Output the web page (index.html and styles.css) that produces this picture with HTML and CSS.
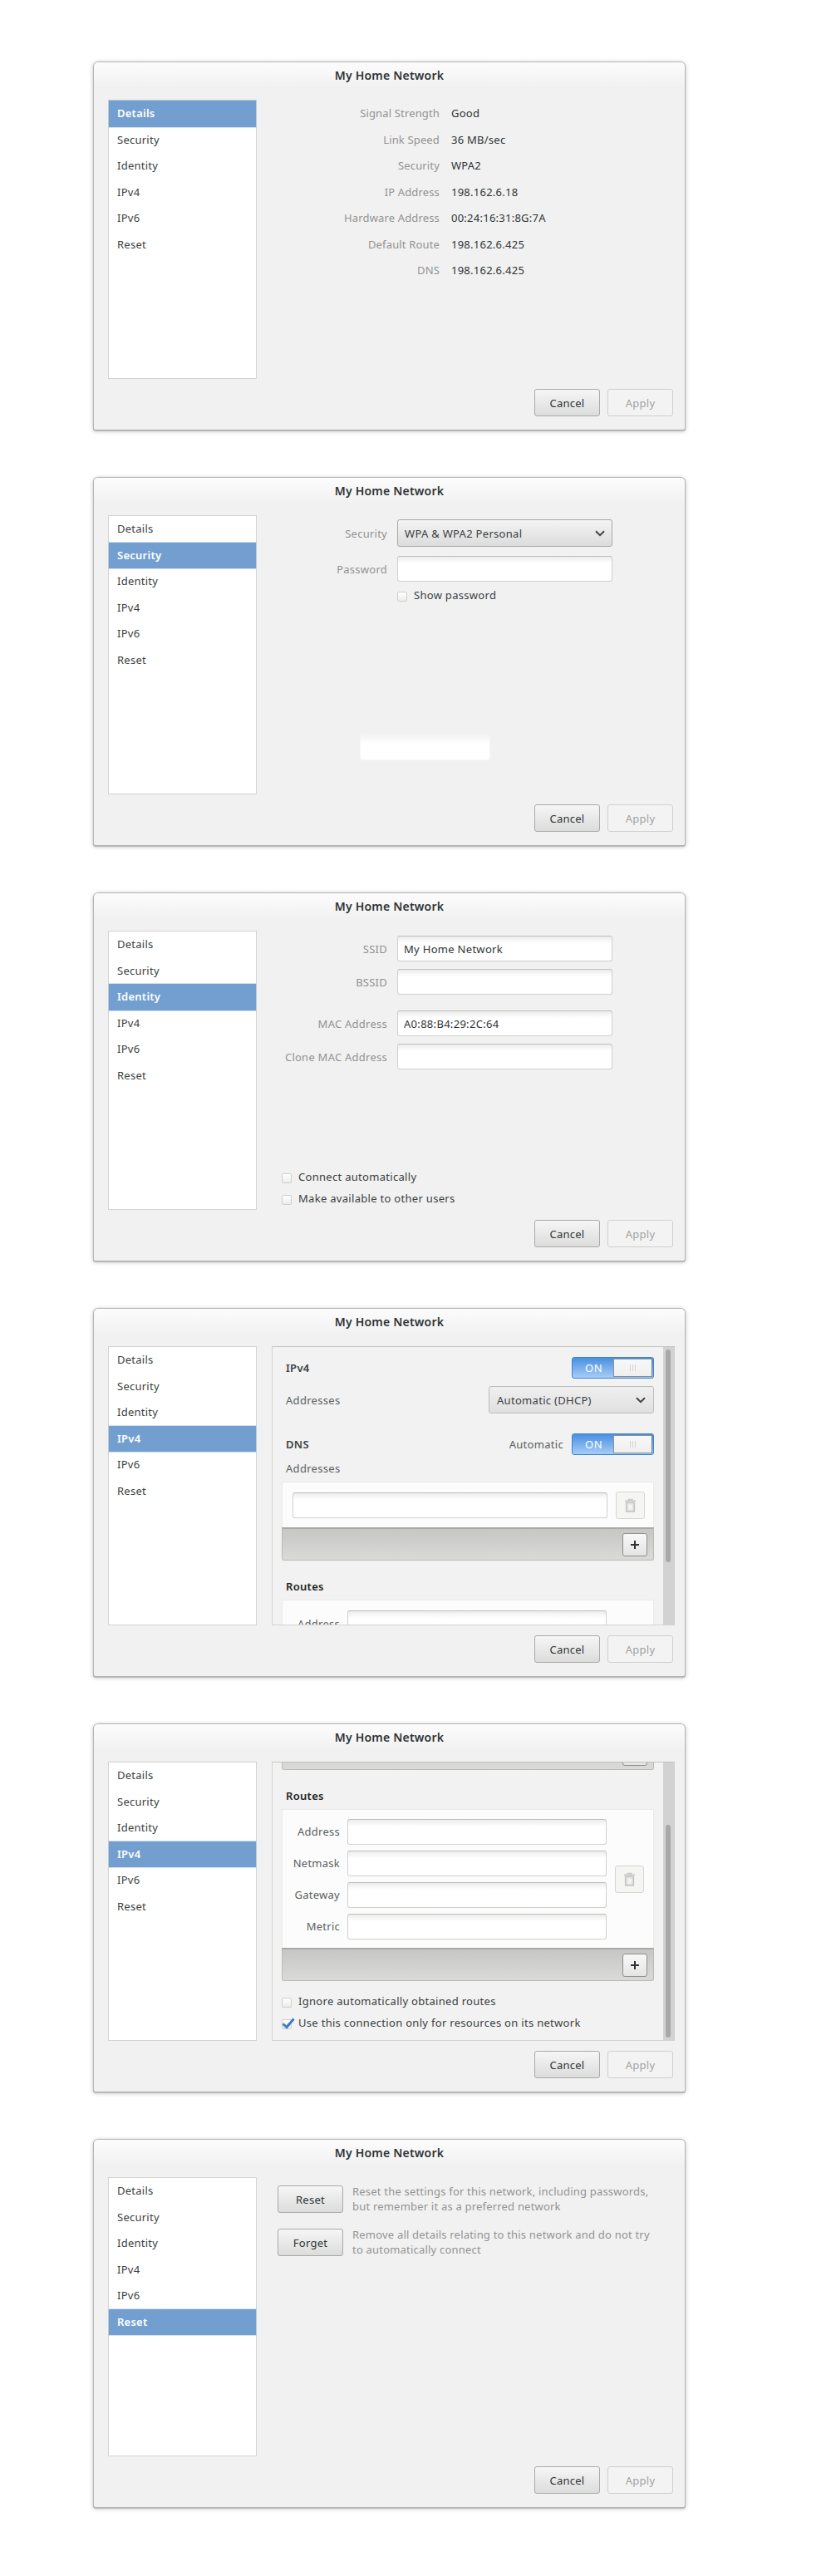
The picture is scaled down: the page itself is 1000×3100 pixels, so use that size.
FILE: index.html
```html
<!DOCTYPE html>
<html lang="en">
<head>
<meta charset="utf-8">
<title>My Home Network</title>
<link rel="stylesheet" href="styles.css">
</head>
<body>
<svg class="defs" width="0" height="0" aria-hidden="true">
  <symbol id="chev" viewBox="0 0 12 8"><path d="M1 1.200 6 6.200 11 1.200" fill="none" stroke="#3f4446" stroke-width="2"/></symbol>
  <symbol id="trash" viewBox="0 0 16 18"><path d="M1 3.500h14M5.500 3V1.500h5V3" fill="none" stroke="#c9c9c6" stroke-width="1.600"/><path d="M2.800 5.500h10.400v11.500H2.800z" fill="#e2e2df" stroke="#c4c4c1" stroke-width="1.600"/><path d="M5.500 8h5v6.500h-5z" fill="#f4f4f2"/></symbol>
  <symbol id="plus" viewBox="0 0 10 10"><path d="M5 0v10M0 5h10" stroke="#2e3436" stroke-width="2"/></symbol>
</svg>
<main class="page">

  <section class="dialog">
    <header class="title">My Home Network</header>
    <div class="body">
      <ul class="nav">
        <li class="sel">Details</li><li>Security</li><li>Identity</li><li>IPv4</li><li>IPv6</li><li>Reset</li>
      </ul>
      <dl class="details">
        <dt>Signal Strength</dt><dd>Good</dd>
        <dt>Link Speed</dt><dd>36 MB/sec</dd>
        <dt>Security</dt><dd>WPA2</dd>
        <dt>IP Address</dt><dd>198.162.6.18</dd>
        <dt>Hardware Address</dt><dd>00:24:16:31:8G:7A</dd>
        <dt>Default Route</dt><dd>198.162.6.425</dd>
        <dt>DNS</dt><dd>198.162.6.425</dd>
      </dl>
    </div>
    <footer class="foot"><button class="btn">Cancel</button><button class="btn off">Apply</button></footer>
  </section>

  <section class="dialog">
    <header class="title">My Home Network</header>
    <div class="body">
      <ul class="nav">
        <li>Details</li><li class="sel">Security</li><li>Identity</li><li>IPv4</li><li>IPv6</li><li>Reset</li>
      </ul>
      <div class="form sec">
        <div class="row"><label>Security</label><div class="select"><span>WPA &amp; WPA2 Personal</span><svg class="chev"><use href="#chev"/></svg></div></div>
        <div class="row gap11"><label>Password</label><input class="field" type="text"></div>
        <div class="check show"><i class="box"></i><span>Show password</span></div>
        <div class="ghost"></div>
      </div>
    </div>
    <footer class="foot"><button class="btn">Cancel</button><button class="btn off">Apply</button></footer>
  </section>

  <section class="dialog">
    <header class="title">My Home Network</header>
    <div class="body">
      <ul class="nav">
        <li>Details</li><li>Security</li><li class="sel">Identity</li><li>IPv4</li><li>IPv6</li><li>Reset</li>
      </ul>
      <div class="form ident">
        <div class="row"><label>SSID</label><input class="field" type="text" value="My Home Network"></div>
        <div class="row gap9"><label>BSSID</label><input class="field" type="text"></div>
        <div class="row gap19"><label>MAC Address</label><input class="field" type="text" value="A0:88:B4:29:2C:64"></div>
        <div class="row gap9"><label>Clone MAC Address</label><input class="field" type="text"></div>
        <div class="check auto"><i class="box"></i><span>Connect automatically</span></div>
        <div class="check avail"><i class="box"></i><span>Make available to other users</span></div>
      </div>
    </div>
    <footer class="foot"><button class="btn">Cancel</button><button class="btn off">Apply</button></footer>
  </section>

  <section class="dialog">
    <header class="title">My Home Network</header>
    <div class="body">
      <ul class="nav">
        <li>Details</li><li>Security</li><li>Identity</li><li class="sel">IPv4</li><li>IPv6</li><li>Reset</li>
      </ul>
      <div class="panel">
        <div class="view">
          <div class="scroll">
            <div class="line first"><h3>IPv4</h3><div class="toggle"><span>ON</span><b class="grip"><i></i><i></i><i></i></b></div></div>
            <div class="line addr"><p class="sub">Addresses</p><div class="select wide"><span>Automatic (DHCP)</span><svg class="chev"><use href="#chev"/></svg></div></div>
            <div class="line dns"><h3>DNS</h3><div class="auto-wrap"><p class="sub">Automatic</p><div class="toggle"><span>ON</span><b class="grip"><i></i><i></i><i></i></b></div></div></div>
            <p class="sub under">Addresses</p>
            <div class="list one"><input class="field" type="text"><button class="trash"><svg><use href="#trash"/></svg></button></div>
            <div class="bar"><button class="add"><svg><use href="#plus"/></svg></button></div>
            <h3 class="routes">Routes</h3>
            <div class="list four cut">
              <div class="grid">
                <label>Address</label><input class="field" type="text">
              </div>
            </div>
          </div>
        </div>
        <div class="track"><div class="thumb"></div></div>
      </div>
    </div>
    <footer class="foot"><button class="btn">Cancel</button><button class="btn off">Apply</button></footer>
  </section>

  <section class="dialog down">
    <header class="title">My Home Network</header>
    <div class="body">
      <ul class="nav">
        <li>Details</li><li>Security</li><li>Identity</li><li class="sel">IPv4</li><li>IPv6</li><li>Reset</li>
      </ul>
      <div class="panel">
        <div class="view">
          <div class="scroll">
            <div class="bar"><button class="add"><svg><use href="#plus"/></svg></button></div>
            <h3 class="routes">Routes</h3>
            <div class="list four">
              <div class="grid">
                <label>Address</label><input class="field" type="text">
                <label>Netmask</label><input class="field" type="text">
                <label>Gateway</label><input class="field" type="text">
                <label>Metric</label><input class="field" type="text">
              </div>
              <button class="trash"><svg><use href="#trash"/></svg></button>
            </div>
            <div class="bar"><button class="add"><svg><use href="#plus"/></svg></button></div>
            <div class="check ign"><i class="box"></i><span>Ignore automatically obtained routes</span></div>
            <div class="check only"><i class="box"><svg viewBox="0 0 16 14"><path d="M1.500 7.500 6 11.500 14.500 1.500" fill="none" stroke="#3b7dc8" stroke-width="3"/></svg></i><span>Use this connection only for resources on its network</span></div>
          </div>
        </div>
        <div class="track"><div class="thumb"></div></div>
      </div>
    </div>
    <footer class="foot"><button class="btn">Cancel</button><button class="btn off">Apply</button></footer>
  </section>

  <section class="dialog">
    <header class="title">My Home Network</header>
    <div class="body">
      <ul class="nav">
        <li>Details</li><li>Security</li><li>Identity</li><li>IPv4</li><li>IPv6</li><li class="sel">Reset</li>
      </ul>
      <div class="reset">
        <div class="action"><button class="btn">Reset</button><p>Reset the settings for this network, including passwords,<br>but remember it as a preferred network</p></div>
        <div class="action"><button class="btn">Forget</button><p>Remove all details relating to this network and do not try<br>to automatically connect</p></div>
      </div>
    </div>
    <footer class="foot"><button class="btn">Cancel</button><button class="btn off">Apply</button></footer>
  </section>

</main>
</body>
</html>
```
FILE: styles.css
```css
* { box-sizing: border-box; }
html, body { margin: 0; padding: 0; background: #fff; }
body { font-family: "Noto Sans", "Open Sans", sans-serif; font-size: 13px; color: #2e3436; }
.defs { position: absolute; }
.page { display: flex; flex-direction: column; gap: 58px; padding: 75px 0 83px 113px; }

.dialog { width: 711px; height: 442px; background: #f1f1f1; border-radius: 5px 5px 2px 2px; box-shadow: 0 0 0 1px #b5b5b2, 0 1px 0 1px #b9b9b6, 0 1px 5px 1px rgba(0,0,0,.25); }
.title { height: 31px; line-height: 31px; text-align: center; font-size: 14px; font-weight: 600; letter-spacing: .2px; color: #2e3436; border-radius: 5px 5px 0 0; background: linear-gradient(#fcfcfc, #f1f1f1); }
.body { display: flex; gap: 18px; padding: 14px 12px 0 17px; height: 350px; }
.foot { display: flex; justify-content: flex-end; gap: 9px; padding: 12px 14px 0 0; }

.nav { flex: none; width: 179px; height: 336px; margin: 0; padding: 0; list-style: none; background: #fff; border: 1px solid #d3d3cf; }
.nav li { height: 31.5px; line-height: 31.5px; padding-left: 10px; color: #3a3f41; letter-spacing: .25px; }
.nav li.sel { background: #729fcf; color: #fff; font-weight: 600; box-shadow: 0 0 0 .5px #a9c3df; }

.btn { display: block; flex: none; width: 79px; height: 33px; padding: 0; font: 13px "Noto Sans", sans-serif; letter-spacing: .25px; color: #2e3436; border: 1px solid #a9a9a6; border-radius: 3px; background: linear-gradient(#f6f6f6, #dcdcdc); }
.btn.off { color: #a2a2a0; border-color: #cfcfcc; background: #f3f3f3; }

.details { display: grid; grid-template-columns: 202px auto; grid-auto-rows: 31.5px; column-gap: 14px; align-content: start; margin: 1px 0 0; line-height: 31.5px; flex: 1; }
.details dt { text-align: right; color: #929292; letter-spacing: .15px; }
.details dd { margin: 0; color: #2e3436; letter-spacing: .25px; }

.form { flex: 1; display: flex; flex-direction: column; }
.row { display: flex; align-items: center; gap: 12px; }
.row label { width: 139px; text-align: right; color: #929292; letter-spacing: .25px; }
.gap11 { margin-top: 11px; }
.gap9 { margin-top: 9px; }
.gap19 { margin-top: 19px; }
.sec { padding-top: 5px; }
.ident { padding-top: 6px; }

.field { display: block; width: 259px; height: 31px; padding: 0 7px; font: 13px "Noto Sans", sans-serif; letter-spacing: .3px; color: #2e3436; border: 1px solid #d0d0cc; border-top-color: #bfbfbb; border-radius: 3px; outline: none; background: linear-gradient(#ececec, #fff 8px); }
.select { display: flex; align-items: center; justify-content: space-between; width: 259px; height: 33px; padding: 0 8px; letter-spacing: .3px; color: #3a3f41; border: 1px solid #a9a9a6; border-radius: 3px; background: linear-gradient(#f4f4f4, #dcdcdc); }
.select.wide { width: 199px; border-color: #bcbcb9; background: linear-gradient(#efefef, #e0e0e0); padding: 0 9px; }
.chev { width: 12px; height: 8px; flex: none; }

.check { display: flex; align-items: flex-start; gap: 8px; height: 13px; line-height: 13px; color: #3a3f41; letter-spacing: .3px; }
.box { position: relative; display: block; flex: none; width: 12px; height: 12px; margin-top: 2px; border: 1px solid #cfcfca; border-radius: 2px; background: linear-gradient(#fff, #ececec); }
.box svg { position: absolute; left: -1px; top: -3px; width: 16px; height: 14px; }
.show { margin: 10px 0 0 151px; }
.ghost { width: 157px; height: 31px; margin: 161px 0 0 106px; border: 1px solid #f6f6f6; border-radius: 3px; background: linear-gradient(#f4f4f4, #fff 10px); }
.auto { margin: 123px 0 0 12px; }
.avail { margin: 13px 0 0 12px; }

.panel { display: flex; flex: 1; height: 336px; background: #f2f2f2; border: 1px solid #d3d3cf; border-top-color: #c4c4c0; border-right: 0; }
.view { flex: 1; min-width: 0; overflow: hidden; }
.scroll { padding: 12px 11px 0; }
.down .scroll { margin-top: -31px; padding-top: 0; }
.track { flex: none; width: 14px; background: #d2d2d2; }
.thumb { width: 6px; height: 256px; margin: 3px 0 0 3px; border-radius: 3px; background: #a8a8a8; }
.down .thumb { margin-top: 75px; }

.line { display: flex; align-items: center; justify-content: space-between; padding-left: 5px; }
.first { height: 26px; }
.addr { height: 33px; margin-top: 9px; }
.dns { height: 26px; margin-top: 24px; }
.auto-wrap { display: flex; align-items: center; gap: 10px; }
h3 { margin: 0; font-size: 13px; font-weight: 600; letter-spacing: .3px; color: #3a3f41; }
.sub { margin: 0; color: #5a5e60; letter-spacing: .3px; }
.under { height: 18px; line-height: 18px; margin-top: 7px; padding-left: 5px; }
.routes { height: 18px; line-height: 18px; margin-top: 22px; padding-left: 5px; color: #1c1f20; }

.toggle { position: relative; width: 99px; height: 26px; border: 1px solid #3584d9; border-radius: 3px; background: linear-gradient(#4a8fe0, #a6cdf7); }
.toggle span { display: block; width: 51px; text-align: center; line-height: 24px; color: #fff; letter-spacing: .6px; }
.grip { position: absolute; right: 1px; top: 1px; display: flex; align-items: center; justify-content: center; gap: 2px; width: 47px; height: 22px; border: 1px solid #8f8f8f; border-right-color: #777; background: linear-gradient(#f8f8f8, #efefef); }
.grip i { display: block; width: 1px; height: 8px; background: #d4d4d2; }

.list { display: flex; align-items: center; gap: 10px; width: 448px; padding-left: 12px; background: #fcfcfc; border: 1px solid #eaeae6; border-bottom: 0; }
.list .field { width: 379px; }
.one { height: 55px; }
.list.one { margin-top: 7px; }
.four { height: 167px; margin-top: 7px; padding-left: 0; }
.cut { align-items: flex-start; padding-top: 12px; }
.list.four .field { width: 312px; }
.grid { display: grid; grid-template-columns: 69px 312px; grid-auto-rows: 31px; row-gap: 7px; column-gap: 9px; align-items: center; }
.grid label { text-align: right; color: #5a5e60; letter-spacing: .25px; }
.trash { display: flex; align-items: center; justify-content: center; flex: none; width: 35px; height: 33px; padding: 0; border: 1px solid #d6d6d2; border-radius: 3px; background: #f5f5f4; }
.trash svg { width: 15px; height: 17px; }
.bar { display: flex; align-items: center; justify-content: flex-end; width: 448px; height: 40px; padding-right: 7px; border: 1px solid #b9bab6; border-top: 2px solid #a9aaa7; border-radius: 0 0 3px 3px; background: linear-gradient(#c6c7c4, #dadbd8); }
.add { display: flex; align-items: center; justify-content: center; width: 30px; height: 28px; padding: 0; border: 1px solid #8f8f8c; border-radius: 3px; background: linear-gradient(#f8f8f8, #e4e4e4); }
.add svg { width: 10px; height: 10px; }
.ign { margin-top: 18px; }
.only { margin-top: 13px; }

.reset { flex: 1; display: flex; flex-direction: column; gap: 17px; padding: 9px 0 0 7px; }
.action { display: flex; align-items: center; gap: 11px; }
.action p { margin: 0; line-height: 17.5px; color: #939393; letter-spacing: .2px; }
```
